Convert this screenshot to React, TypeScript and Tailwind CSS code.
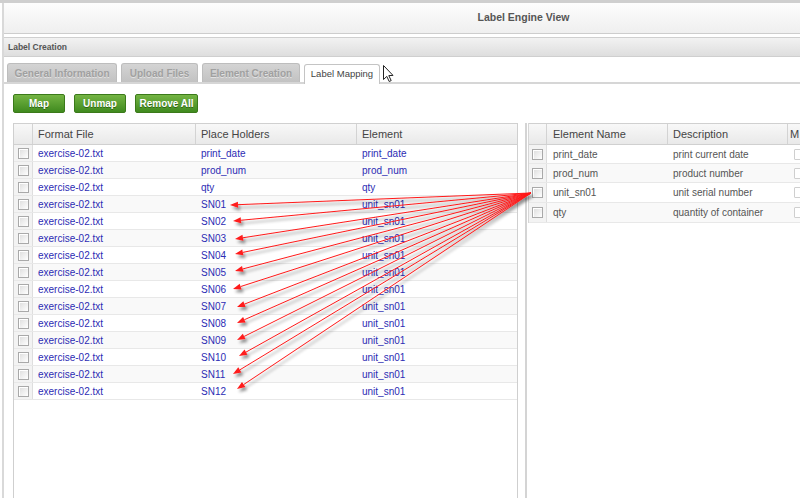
import React from "react";

const leftRows = [
  ["print_date", "print_date"],
  ["prod_num", "prod_num"],
  ["qty", "qty"],
  ["SN01", "unit_sn01"],
  ["SN02", "unit_sn01"],
  ["SN03", "unit_sn01"],
  ["SN04", "unit_sn01"],
  ["SN05", "unit_sn01"],
  ["SN06", "unit_sn01"],
  ["SN07", "unit_sn01"],
  ["SN08", "unit_sn01"],
  ["SN09", "unit_sn01"],
  ["SN10", "unit_sn01"],
  ["SN11", "unit_sn01"],
  ["SN12", "unit_sn01"],
];

const rightRows = [
  ["print_date", "print current date"],
  ["prod_num", "product number"],
  ["unit_sn01", "unit serial number"],
  ["qty", "quantity of container"],
];

// arrow tips, one per SN row
const tips = [
  [230, 205], [233, 221], [235, 239], [235, 254], [235, 271], [233, 289],
  [237, 307], [237, 323], [237, 340], [239, 356], [233, 374], [237, 389],
];
const start = [531, 193];

const Check = () => (
  <div className="w-[11px] h-[11px] border border-[#a9a9a9] bg-gradient-to-br from-[#dcdcdc] to-[#ffffff] shadow-[inset_1px_1px_0_#fff]" />
);

const Arrows = () => (
  <svg className="absolute inset-0 pointer-events-none" width="800" height="498">
    <defs>
      <filter id="sh" x="-10%" y="-10%" width="120%" height="130%">
        <feDropShadow dx="2" dy="3" stdDeviation="1.4" floodColor="#000" floodOpacity="0.45" />
      </filter>
    </defs>
    <g filter="url(#sh)">
      {tips.map(([x, y], i) => {
        const a = Math.atan2(y - start[1], x - start[0]);
        const len = 8;
        const w = 3;
        const bx = x - Math.cos(a) * len;
        const by = y - Math.sin(a) * len;
        const p1 = `${bx + Math.sin(a) * w},${by - Math.cos(a) * w}`;
        const p2 = `${bx - Math.sin(a) * w},${by + Math.cos(a) * w}`;
        return (
          <g key={i}>
            <line x1={start[0]} y1={start[1]} x2={bx} y2={by} stroke="#ff1a1a" strokeWidth="1" />
            <polygon points={`${x},${y} ${p1} ${p2}`} fill="#ff1a1a" />
          </g>
        );
      })}
    </g>
    {/* mouse pointer */}
    <path
      d="M383.5 65.5 L383.5 79.5 L386.8 76.4 L389.2 81.5 L391.2 80.6 L388.8 75.6 L393 75.4 Z"
      fill="#fff"
      stroke="#222"
      strokeWidth="1"
    />
  </svg>
);

export default function App() {
  return (
    <div className="relative w-[800px] h-[498px] overflow-hidden bg-white font-['Liberation_Sans',Arial,sans-serif]">
      <div className="h-[3px] bg-[#cfcfcf]" />
      <div className="ml-[2px] border-l-2 border-[#d9d9d9] h-[495px] flex flex-col">
        {/* page header */}
        <div className="h-[31px] shrink-0 flex items-center justify-center pl-[243px] bg-gradient-to-b from-[#fdfdfd] to-[#efefef] border-b border-[#cdcdcd]">
          <span className="text-[10.5px] font-bold text-[#555]">Label Engine View</span>
        </div>
        <div className="h-[3px] shrink-0" />
        <div className="h-[20px] shrink-0 flex items-center pl-[4px] bg-gradient-to-b from-[#f2f2f2] to-[#dedede] border-t border-b border-[#cfcfcf]">
          <span className="text-[8.5px] font-bold text-[#555]">Label Creation</span>
        </div>

        {/* tabs */}
        <div className="h-[27px] shrink-0 flex items-end gap-[4px] pl-[3px] border-b-2 border-[#d6d6d6]">
          {["General Information", "Upload Files", "Element Creation"].map((t, i) => (
            <div
              key={t}
              className={
                "h-[19px] shrink-0 flex items-center justify-center rounded-t-[3px] border border-b-0 border-[#bdbdbd] bg-gradient-to-b from-[#d4d4d4] to-[#c2c2c2] text-[10px] font-semibold text-[#a0a0a0] [text-shadow:0_1px_0_#e2e2e2] " +
                (i === 0 ? "w-[110px]" : i === 1 ? "w-[77px]" : "w-[98px]")
              }
            >
              {t}
            </div>
          ))}
          <div className="h-[20px] w-[76px] shrink-0 -mb-[2px] flex items-center justify-center rounded-t-[3px] border border-b-0 border-[#c4c4c4] bg-white text-[9.5px] text-[#444]">
            Label Mapping
          </div>
        </div>

        {/* buttons */}
        <div className="flex shrink-0 gap-[9px] pl-[9px] mt-[10px]">
          {[
            ["Map", "w-[52px]"],
            ["Unmap", "w-[52px]"],
            ["Remove All", "w-[63px]"],
          ].map(([t, w]) => (
            <div
              key={t}
              className={`${w} h-[19px] flex items-center justify-center rounded-[2px] border border-[#3b7a1a] bg-gradient-to-b from-[#74b443] to-[#3f8a1e] text-white text-[10px] font-bold [text-shadow:0_1px_0_#2d6412]`}
            >
              {t}
            </div>
          ))}
        </div>

        {/* tables */}
        <div className="flex mt-[10px] flex-1 min-h-0">
          <div className="ml-[9px] w-[505px] shrink-0 border-l border-r border-[#cfcfcf] flex flex-col">
            <div className="flex h-[22px] border-t border-b border-[#d0d0d0] bg-gradient-to-b from-[#f8f8f8] to-[#e9e9e9] text-[11px] text-[#444]">
              <div className="w-[19px] border-r border-[#d3d3d3]" />
              <div className="w-[163px] pl-[5px] flex items-center border-r border-[#d3d3d3]">Format File</div>
              <div className="w-[161px] pl-[5px] flex items-center border-r border-[#d3d3d3]">Place Holders</div>
              <div className="flex-1 pl-[5px] flex items-center">Element</div>
            </div>
            {leftRows.map(([ph, el], i) => (
              <div
                key={i}
                className={`flex h-[17px] border-b border-[#e8e8e8] text-[10px] text-[#2c2cb4] ${i % 2 ? "bg-[#f9f9f9]" : "bg-white"}`}
              >
                <div className="w-[19px] flex items-center justify-center bg-[#f3f3f3] border-r border-[#dedede]">
                  <Check />
                </div>
                <div className="w-[163px] pl-[5px] flex items-center">exercise-02.txt</div>
                <div className="w-[161px] pl-[5px] flex items-center">{ph}</div>
                <div className="flex-1 pl-[5px] flex items-center">{el}</div>
              </div>
            ))}
          </div>

          <div className="ml-[7px] flex-1 border-l-2 border-[#d4d4d4] pl-[1px] flex flex-col">
            <div className="w-[300px] shrink-0 border-l border-[#d6d6d6] flex flex-col">
              <div className="flex h-[22px] border-t border-b border-[#d0d0d0] bg-gradient-to-b from-[#f8f8f8] to-[#e9e9e9] text-[11px] text-[#444]">
                <div className="w-[18px] shrink-0 border-r border-[#d3d3d3]" />
                <div className="w-[121px] shrink-0 pl-[6px] flex items-center border-r border-[#d3d3d3]">Element Name</div>
                <div className="w-[120px] shrink-0 pl-[5px] flex items-center border-r border-[#d3d3d3]">Description</div>
                <div className="flex-1 pl-[2px] flex items-center">M</div>
              </div>
              {rightRows.map(([n, d], i) => (
                <div
                  key={i}
                  className={`flex ${i < 2 ? "h-[19px]" : "h-[20px]"} border-b border-[#e8e8e8] text-[10px] text-[#555] ${i % 2 ? "bg-[#f9f9f9]" : "bg-white"}`}
                >
                  <div className="w-[18px] shrink-0 flex items-center justify-center bg-[#f3f3f3] border-r border-[#dedede]">
                    <Check />
                  </div>
                  <div className="w-[121px] shrink-0 pl-[6px] flex items-center">{n}</div>
                  <div className="w-[120px] shrink-0 pl-[5px] flex items-center">{d}</div>
                  <div className="flex-1 pl-[6px] flex items-center">
                    <div className="w-[12px] h-[11px] border border-[#cfcfcf] rounded-[1px] bg-white" />
                  </div>
                </div>
              ))}
            </div>
          </div>
        </div>
      </div>
      <Arrows />
    </div>
  );
}
